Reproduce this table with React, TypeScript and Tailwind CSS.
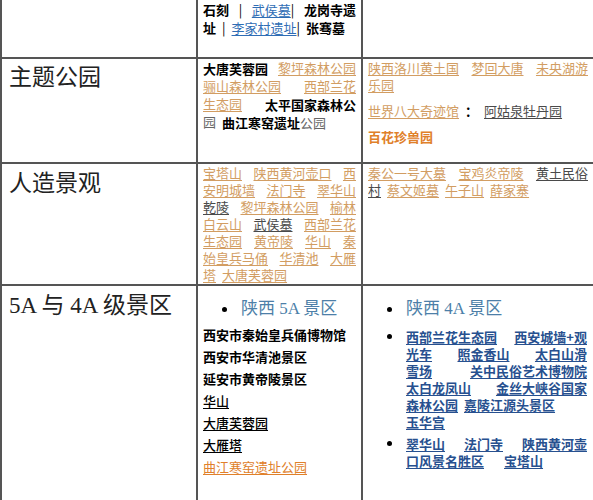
import type { ReactNode } from "react";

const tan = "text-[#d29d62] underline decoration-[#d29d62] underline-offset-2";
const gray = "text-[#4a4a4a] underline decoration-[#4a4a4a] underline-offset-2";
const blue = "text-[#2f6db5] underline decoration-[#2f6db5] underline-offset-2";
const navy = "text-[#27508f] underline decoration-[#27508f] underline-offset-2";

const serif = { fontFamily: '"Liberation Serif", "Noto Sans CJK SC", serif' };

function Line({ children, left }: { children: ReactNode; left?: boolean }) {
  return (
    <div className={left ? "flex gap-[6px] whitespace-nowrap" : "flex justify-between whitespace-nowrap"}>
      {children}
    </div>
  );
}

function Dot() {
  return <span className="inline-block h-[5px] w-[5px] rounded-full bg-black" />;
}

export default function App() {
  return (
    <div
      className="w-[593px] h-[500px] overflow-hidden bg-white text-black"
      style={{ fontFamily: '"Noto Sans CJK SC", "Noto Sans", sans-serif' }}
    >
      <table className="w-[593px] table-fixed border-collapse">
        <colgroup>
          <col className="w-[196px]" />
          <col className="w-[165px]" />
          <col className="w-[232px]" />
        </colgroup>
        <tbody>
          <tr className="h-[58px]">
            <td className="border-2 border-t-0 border-[#555]"></td>
            <td className="border-2 border-t-0 border-[#555] align-top px-[5px] pt-[1px] text-[13px] leading-[18px]">
              <Line>
                <span className="font-bold">石刻</span>
                <span>|</span>
                <span>
                  <span className={blue}>武侯墓</span>|
                </span>
                <span className="font-bold">龙岗寺遗</span>
              </Line>
              <Line left>
                <span className="font-bold">址</span>
                <span>|</span>
                <span>
                  <span className={blue}>李家村遗址</span>|
                </span>
                <span className="font-bold">张骞墓</span>
              </Line>
            </td>
            <td className="border-2 border-t-0 border-[#555]"></td>
          </tr>

          <tr className="h-[105px]">
            <td className="border-2 border-[#555] align-top pl-[7px] pt-[4px] text-[23px] leading-[30px] text-[#222]" style={serif}>
              主题公园
            </td>
            <td className="border-2 border-[#555] align-top px-[5px] pt-[1px] text-[13px] leading-[18px]">
              <Line>
                <span className="font-bold">大唐芙蓉园</span>
                <span className={tan} style={serif}>黎坪森林公园</span>
              </Line>
              <Line>
                <span className={tan} style={serif}>骊山森林公园</span>
                <span className={tan} style={serif}>西部兰花</span>
              </Line>
              <Line>
                <span className={tan} style={serif}>生态园</span>
                <span className="font-bold">太平国家森林公</span>
              </Line>
              <Line left>
                <span className="text-[#666]" style={serif}>园</span>
                <span>
                  <span className="font-bold">曲江寒窑遗址</span>
                  <span className="text-[#666]" style={serif}>公园</span>
                </span>
              </Line>
            </td>
            <td className="border-2 border-[#555] align-top px-[5px] pt-[1px] text-[13px]" style={serif}>
              <div className="leading-[17px]">
                <Line>
                  <span className={tan}>陕西洛川黄土国</span>
                  <span className={tan}>梦回大唐</span>
                  <span className={tan}>未央湖游</span>
                </Line>
                <Line left>
                  <span className={tan}>乐园</span>
                </Line>
              </div>
              <div className="mt-[9px] leading-[17px]">
                <Line left>
                  <span className={tan}>世界八大奇迹馆</span>
                  <span className="font-bold">：</span>
                  <span className={gray}>阿姑泉牡丹园</span>
                </Line>
              </div>
              <div
                className="mt-[8px] leading-[17px] font-bold text-[#e0802a]"
                style={{ fontFamily: '"Noto Sans CJK SC", sans-serif' }}
              >
                百花珍兽园
              </div>
            </td>
          </tr>

          <tr className="h-[120px]">
            <td className="border-2 border-[#555] align-top pl-[7px] pt-[5px] text-[23px] leading-[30px] text-[#222]" style={serif}>
              人造景观
            </td>
            <td className="border-2 border-[#555] align-top px-[5px] pt-[1px] text-[13px] leading-[17px]" style={serif}>
              <Line>
                <span className={tan}>宝塔山</span>
                <span className={tan}>陕西黄河壶口</span>
                <span className={tan}>西</span>
              </Line>
              <Line>
                <span className={tan}>安明城墙</span>
                <span className={tan}>法门寺</span>
                <span className={tan}>翠华山</span>
              </Line>
              <Line>
                <span className={gray}>乾陵</span>
                <span className={tan}>黎坪森林公园</span>
                <span className={tan}>榆林</span>
              </Line>
              <Line>
                <span className={tan}>白云山</span>
                <span className={gray}>武侯墓</span>
                <span className={tan}>西部兰花</span>
              </Line>
              <Line>
                <span className={tan}>生态园</span>
                <span className={tan}>黄帝陵</span>
                <span className={tan}>华山</span>
                <span className={tan}>秦</span>
              </Line>
              <Line>
                <span className={tan}>始皇兵马俑</span>
                <span className={tan}>华清池</span>
                <span className={tan}>大雁</span>
              </Line>
              <Line left>
                <span className={tan}>塔</span>
                <span className={tan}>大唐芙蓉园</span>
              </Line>
            </td>
            <td className="border-2 border-[#555] align-top px-[5px] pt-[1px] text-[13px] leading-[17px]" style={serif}>
              <Line>
                <span className={tan}>秦公一号大墓</span>
                <span className={tan}>宝鸡炎帝陵</span>
                <span className={gray}>黄土民俗</span>
              </Line>
              <Line left>
                <span className={gray}>村</span>
                <span className={tan}>蔡文姬墓</span>
                <span className={tan}>午子山</span>
                <span className={tan}>薛家寨</span>
              </Line>
            </td>
          </tr>

          <tr className="h-[230px]">
            <td className="border-2 border-[#555] align-top pl-[7px] pt-[5px] text-[23px] leading-[30px] text-[#222]" style={serif}>
              5A 与 4A 级景区
            </td>
            <td className="border-2 border-[#555] align-top px-[5px] pt-[11px] text-[13px]">
              <div className="flex items-center pl-[19px] text-[17px] leading-[24px] text-[#4d7fa8]" style={serif}>
                <span className="flex w-[19px] items-center">
                  <Dot />
                </span>
                <span>陕西 5A 景区</span>
              </div>
              <div className="mt-[3px] flex flex-col items-start leading-[22px] font-bold">
                <span>西安市秦始皇兵俑博物馆</span>
                <span>西安市华清池景区</span>
                <span>延安市黄帝陵景区</span>
                <span className="underline underline-offset-2 font-medium">华山</span>
                <span className="underline underline-offset-2 font-medium">大唐芙蓉园</span>
                <span className="underline underline-offset-2 font-medium">大雁塔</span>
                <span className="underline underline-offset-2 text-[#e0802a] font-normal">曲江寒窑遗址公园</span>
              </div>
            </td>
            <td className="border-2 border-[#555] align-top pl-[24px] pr-[6px] pt-[11px] text-[13px]">
              <div className="flex items-center text-[17px] leading-[24px] text-[#4d7fa8]" style={serif}>
                <span className="flex w-[19px] items-center">
                  <Dot />
                </span>
                <span>陕西 4A 景区</span>
              </div>
              <div className="mt-[7px] flex leading-[17px] font-semibold">
                <span className="flex h-[17px] w-[19px] shrink-0 items-center">
                  <Dot />
                </span>
                <div className="flex-1">
                  <Line>
                    <span className={navy}>西部兰花生态园</span>
                    <span className={navy}>西安城墙+观</span>
                  </Line>
                  <Line>
                    <span className={navy}>光车</span>
                    <span className={navy}>照金香山</span>
                    <span className={navy}>太白山滑</span>
                  </Line>
                  <Line>
                    <span className={navy}>雪场</span>
                    <span className={navy}>关中民俗艺术博物院</span>
                  </Line>
                  <Line>
                    <span className={navy}>太白龙凤山</span>
                    <span className={navy}>金丝大峡谷国家</span>
                  </Line>
                  <Line left>
                    <span className={navy}>森林公园</span>
                    <span className={navy}>嘉陵江源头景区</span>
                  </Line>
                  <Line left>
                    <span className={navy}>玉华宫</span>
                  </Line>
                </div>
              </div>
              <div className="mt-[5px] flex leading-[17px] font-semibold">
                <span className="flex h-[17px] w-[19px] shrink-0 items-center">
                  <Dot />
                </span>
                <div className="flex-1">
                  <Line>
                    <span className={navy}>翠华山</span>
                    <span className={navy}>法门寺</span>
                    <span className={navy}>陕西黄河壶</span>
                  </Line>
                  <Line left>
                    <span className={navy}>口风景名胜区</span>
                    <span className="ml-[14px]">
                      <span className={navy}>宝塔山</span>
                    </span>
                  </Line>
                </div>
              </div>
            </td>
          </tr>
        </tbody>
      </table>
    </div>
  );
}
